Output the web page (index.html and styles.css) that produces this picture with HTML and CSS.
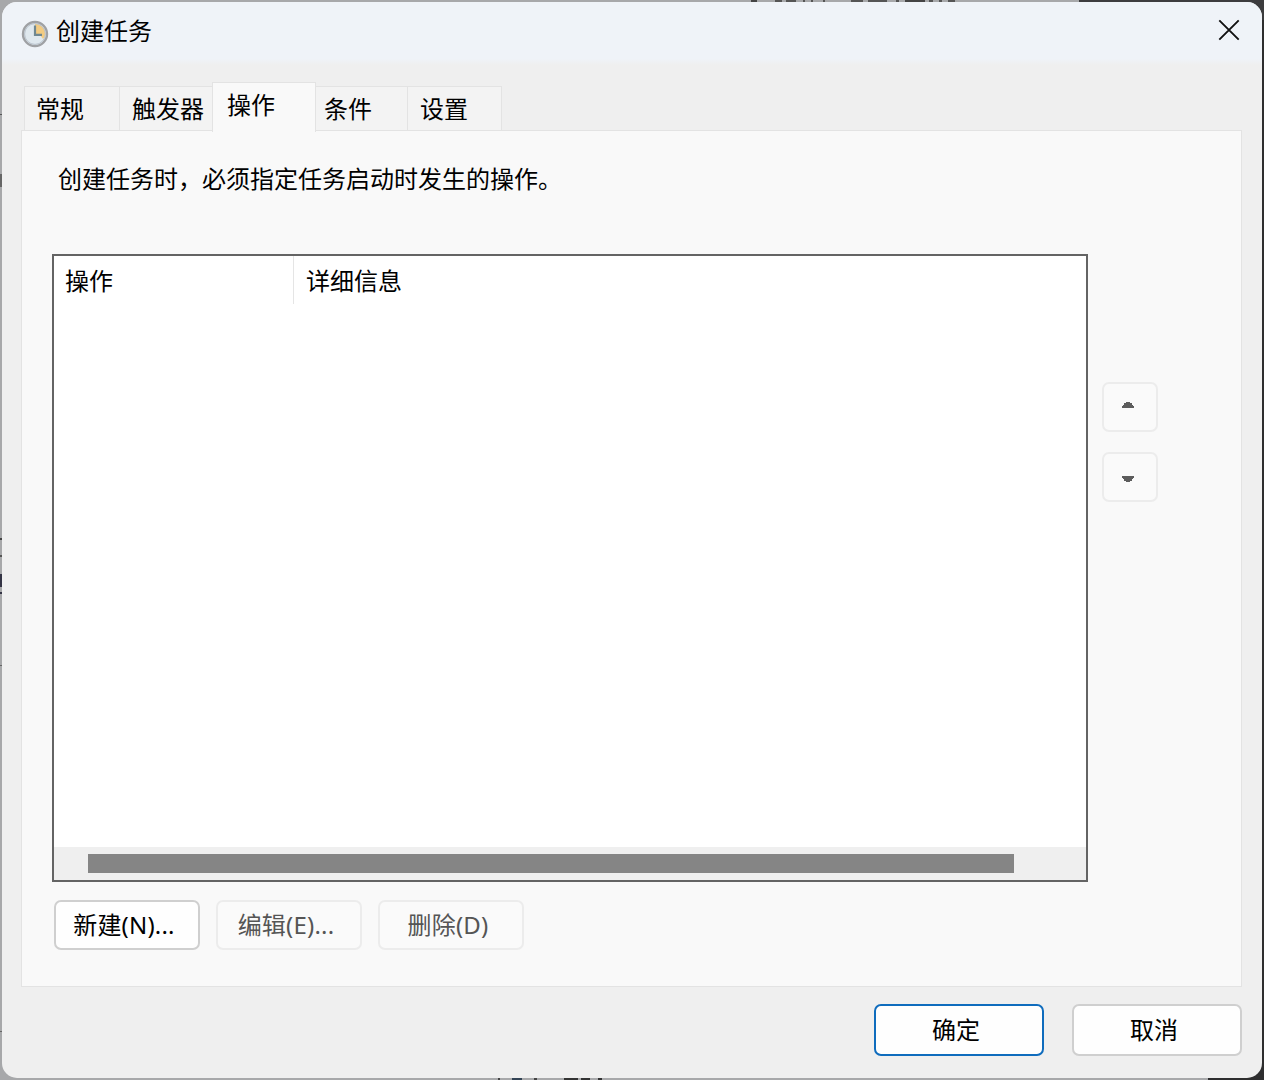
FILE: index.html
```html
<!DOCTYPE html>
<html lang="zh-CN">
<head>
<meta charset="utf-8">
<title>创建任务</title>
<link rel="stylesheet" href="styles.css">
</head>
<body>
<main class="dialog">
  <header class="titlebar">
    <svg class="clock" width="28" height="28" viewBox="0 0 28 28">
      <circle cx="14" cy="14" r="12" fill="#dfe8ee" stroke="#9fa1a4" stroke-width="2.4"/>
      <path d="M14 14V3.5A10.5 10.5 0 0 1 24.5 14Q24 17 22 19L19 15Z" fill="#f2cb82"/>
      <circle cx="14" cy="14" r="10.4" fill="none" stroke="#b9c2cc" stroke-width="1"/>
      <path d="M14 5.5V14.8H21" fill="none" stroke="#6f8790" stroke-width="2.2"/>
    </svg>
    <h1 class="title">创建任务</h1>
    <svg class="close" width="22" height="22" viewBox="0 0 22 22"><path d="M1.3 1.3L20.7 20.7M20.7 1.3L1.3 20.7" stroke="#111" stroke-width="1.9"/></svg>
  </header>
  <nav class="tabs">
    <span class="tab general">常规</span>
    <span class="tab trigger">触发器</span>
    <span class="tab active">操作</span>
    <span class="tab condition">条件</span>
    <span class="tab settings">设置</span>
  </nav>
  <section class="panel">
    <p class="hint">创建任务时，必须指定任务启动时发生的操作。</p>
    <div class="work">
      <div class="list">
        <div class="columns"><span class="col first">操作</span><span class="col">详细信息</span></div>
        <div class="scrollbar"><div class="thumb"></div></div>
      </div>
      <div class="order">
        <button class="btn arrow"><svg width="12" height="6" shape-rendering="crispEdges"><path d="M4 0H8V1H10V3H11V4H12V6H0V4H1V3H2V1H4Z" fill="#5c5c5c"/></svg></button>
        <button class="btn arrow down"><svg width="12" height="6" shape-rendering="crispEdges"><path d="M0 0H12V2H11V3H10V5H8V6H4V5H2V3H1V2H0Z" fill="#5c5c5c"/></svg></button>
      </div>
    </div>
    <div class="actions">
      <button class="btn normal">新建(N)...</button>
      <button class="btn">编辑(E)...</button>
      <button class="btn">删除(D)</button>
    </div>
  </section>
  <footer class="footer">
    <button class="btn normal primary">确定</button>
    <button class="btn normal">取消</button>
  </footer>
</main>
</body>
</html>
```
FILE: styles.css
```css
* { box-sizing: border-box; }
/* The two-pixel rim around the dialog shows slivers of the windows behind it. */
body {
  margin: 0;
  width: 1264px;
  height: 1080px;
  padding: 2px;
  overflow: hidden;
  font: 24px/32px "Noto Sans CJK SC", sans-serif;
  color: #000;
  background:
    linear-gradient(#3c3c3e, #3c3c3e) 1079px 0 / 185px 20px no-repeat,
    linear-gradient(#2e2e2f, #2e2e2f) 1244px 0 / 20px 1080px no-repeat,
    linear-gradient(#2e2e2f, #2e2e2f) 1208px 1060px / 56px 20px no-repeat,
    linear-gradient(90deg, #444 6px, transparent 6px 24px, #555 24px 31px, transparent 31px 35px, #555 35px 45px, transparent 45px 52px, #555 52px 54px, transparent 54px 60px, #555 60px 62px, transparent 62px 72px, #555 72px 74px, transparent 74px 100px, #555 100px 112px, transparent 112px 117px, #555 117px 136px, transparent 136px 145px, #555 145px 148px, transparent 148px 154px, #444 154px 174px, transparent 174px 178px, #555 178px 182px, transparent 182px 188px, #555 188px 191px, transparent 191px 197px, #555 197px 204px, transparent 204px) 751px 0 / 210px 2px no-repeat,
    linear-gradient(90deg, #444 2px, transparent 2px 14px, #345 14px 24px, transparent 24px 36px, #444 36px 39px, transparent 39px 66px, #333 66px 80px, transparent 80px 83px, #333 83px 92px, transparent 92px 100px, #333 100px 104px, transparent 104px) 498px 1078px / 110px 2px no-repeat,
    linear-gradient(#555, #555) 0 114px / 2px 1px no-repeat,
    linear-gradient(#666, #666) 0 174px / 2px 13px no-repeat,
    linear-gradient(#444, #444) 0 538px / 2px 2px no-repeat,
    linear-gradient(#555, #555) 0 555px / 2px 2px no-repeat,
    linear-gradient(#334, #334) 0 574px / 2px 13px no-repeat,
    linear-gradient(#334, #334) 0 592px / 2px 2px no-repeat,
    linear-gradient(#666, #666) 0 665px / 2px 1px no-repeat,
    linear-gradient(#666, #666) 0 1031px / 2px 1px no-repeat,
    #a7a8aa;
}
.dialog {
  width: 1260px;
  height: 1076px;
  border-radius: 15px;
  background: #efefef;
  display: flex;
  flex-direction: column;
  overflow: hidden;
}
.titlebar {
  height: 63px;
  flex: none;
  display: flex;
  align-items: flex-start;
  padding: 0 22px 0 19px;
  background: linear-gradient(#eff3f8 90%, #efefef);
}
.clock { margin-top: 18px; }
.title {
  margin: 12px auto 0 7px;
  font: inherit;
}
.close { margin-top: 17px; }
.tabs {
  height: 66px;
  flex: none;
  display: flex;
  align-items: flex-end;
  padding-left: 22px;
}
.tab {
  height: 45px;
  padding: 5px 0 0 11px;
  border: 1px solid #e3e3e3;
  border-bottom: 0;
  border-right: 0;
  background: #f3f3f3;
  white-space: nowrap;
}
.general { width: 95px; }
.trigger { width: 93px; padding-left: 12px; }
.active {
  width: 104px;
  height: 50px;
  padding-left: 14px;
  margin-bottom: -1px;
  border-right: 1px solid #e3e3e3;
  background: #f9f9f9;
  z-index: 1;
}
.condition { width: 91px; padding-left: 8px; border-left: 0; }
.settings { width: 95px; padding-left: 12px; border-right: 1px solid #e3e3e3; }
.panel {
  width: 1221px;
  height: 857px;
  flex: none;
  margin: -1px 0 0 19px;
  padding: 31px 0 0 31px;
  border: 1px solid #e3e3e3;
  background: #f9f9f9;
}
.hint { margin: 0 0 60px 5px; }
.work { display: flex; gap: 14px; }
.list {
  width: 1036px;
  height: 628px;
  margin-left: -1px;
  border: 2px solid #646464;
  background: #fff;
  display: flex;
  flex-direction: column;
  justify-content: space-between;
}
.columns { display: flex; height: 48px; }
.col { padding: 8px 0 0 12px; }
.first { width: 240px; padding-left: 11px; border-right: 1px solid #e5e5e5; }
.scrollbar { height: 33px; padding: 7px 0 0 34px; background: #efefef; }
.thumb { width: 926px; height: 19px; background: #858585; }
.order {
  display: flex;
  flex-direction: column;
  gap: 20px;
  padding-top: 128px;
}
.btn {
  width: 146px;
  height: 50px;
  padding: 0 6px 1px 0;
  border: 2px solid #ececec;
  border-radius: 7px;
  background: #fafafa;
  color: #555;
  font: 24px/32px "Noto Sans", "Noto Sans CJK SC", sans-serif;
  letter-spacing: 0.2px;
}
.arrow {
  width: 56px;
  padding: 0 4px 4px 0;
  display: flex;
  align-items: center;
  justify-content: center;
}
.down { padding: 3px 4px 0 0; }
.actions { display: flex; gap: 16px; margin: 18px 0 0 1px; }
.normal { background: #fefefe; border-color: #cfcfcf; color: #000; }
.footer {
  display: flex;
  justify-content: flex-end;
  gap: 28px;
  padding: 17px 20px 0 0;
}
.footer .btn { width: 170px; height: 52px; letter-spacing: 0; }
.footer .primary { border-color: #0f6cbd; }
```
